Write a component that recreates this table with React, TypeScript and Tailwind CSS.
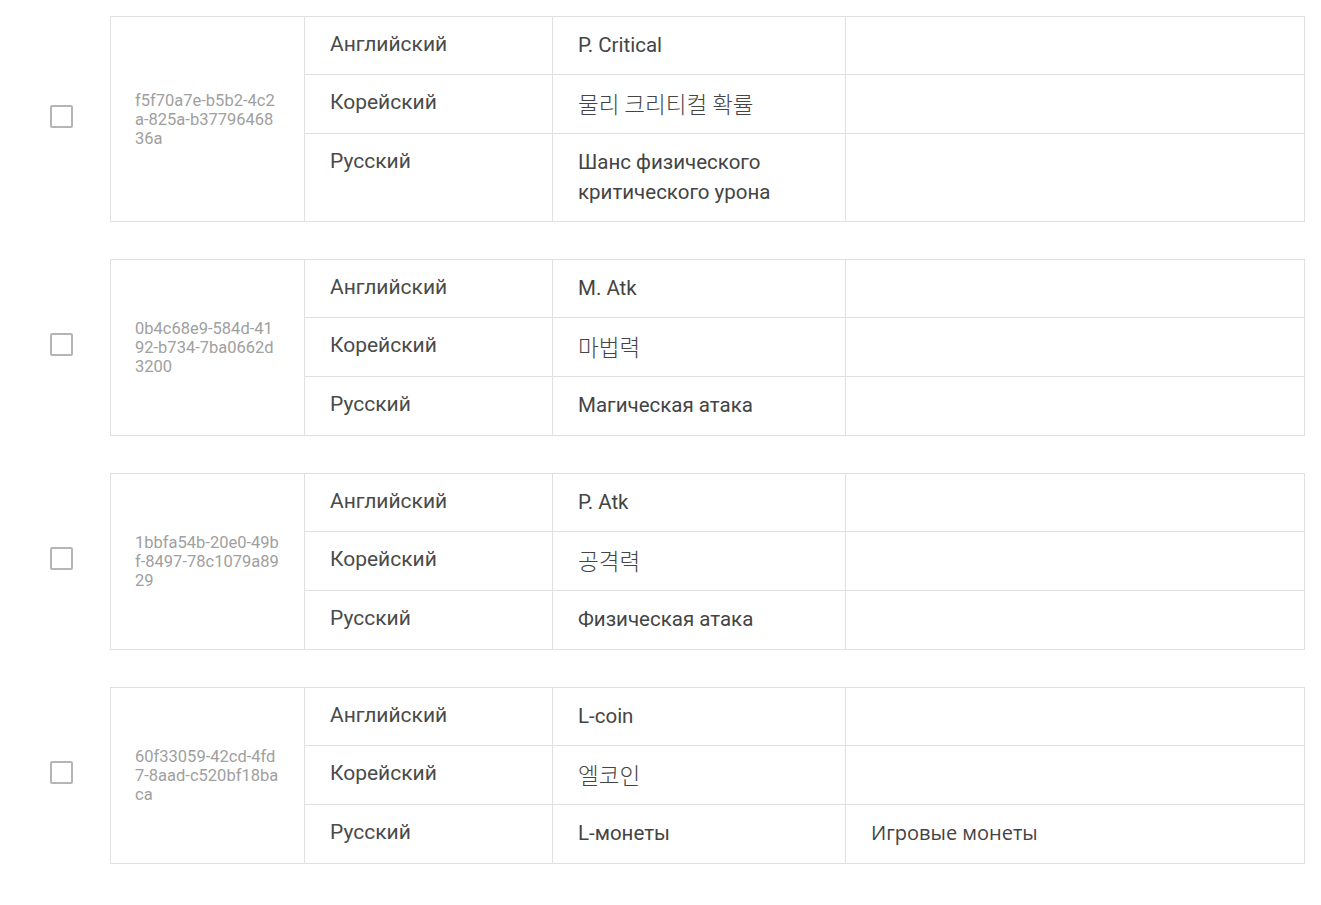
const rows = [
  {
    id: 'f5f70a7e-b5b2-4c2a-825a-b3779646836a',
    en: 'P. Critical',
    ko: '물리 크리티컬 확률',
    ru: 'Шанс физического критического урона',
    note: '',
  },
  { id: '0b4c68e9-584d-4192-b734-7ba0662d3200', en: 'M. Atk', ko: '마법력', ru: 'Магическая атака', note: '' },
  { id: '1bbfa54b-20e0-49bf-8497-78c1079a8929', en: 'P. Atk', ko: '공격력', ru: 'Физическая атака', note: '' },
  { id: '60f33059-42cd-4fd7-8aad-c520bf18baca', en: 'L-coin', ko: '엘코인', ru: 'L-монеты', note: 'Игровые монеты' },
]

function LangRow({
  label,
  value,
  note,
  korean,
  height,
}: {
  label: string
  value: string
  note?: string
  korean?: boolean
  height: string
}) {
  return (
    <div className={`grid grid-cols-[248px_293px_1fr] ${height}`}>
      <div className="border-r border-[#e0e0e0] pl-[25px] pr-4 pt-[13px] leading-[28px] text-[21px] text-[#4a4a4a]">
        {label}
      </div>
      <div className="border-r border-[#e0e0e0] pl-[25px] pr-4 pt-[13px] pb-[14px] leading-[30px] text-[20.5px] text-[#444]">
        {korean ? (
          <span className="text-[22.5px] font-light" style={{ fontFamily: '"Noto Sans CJK KR", sans-serif' }}>
            {value}
          </span>
        ) : (
          <span className="block max-w-[215px]">{value}</span>
        )}
      </div>
      <div
        className="pl-[25px] pr-4 pt-[13px] leading-[30px] text-[20px] text-[#444]"
        style={{ fontFamily: '"Open Sans", sans-serif' }}
      >
        {note}
      </div>
    </div>
  )
}

export default function App() {
  return (
    <div
      className="min-h-[905px] bg-white pt-[16px] pl-[50px] pr-[16px]"
      style={{ fontFamily: 'Roboto, "Noto Sans CJK KR", sans-serif' }}
    >
      <div className="flex flex-col gap-[37px]">
        {rows.map(r => (
          <div key={r.id} className="flex items-center gap-[37px]">
            <div className="w-[23px] h-[23px] shrink-0 border-2 border-[#b5b5b5] rounded-[2px] mb-[6px]" />
            <div className="flex flex-1 border border-[#e0e0e0]">
              <div className="w-[194px] shrink-0 border-r border-[#e0e0e0] flex items-center pl-[24px] pr-[24px]">
                <p className="text-[16.5px] leading-[19px] text-[#a0a0a0] break-all">{r.id}</p>
              </div>
              <div className="flex-1">
                <div className="border-b border-[#e0e0e0]">
                  <LangRow label="Английский" value={r.en} height="h-[57px]" />
                </div>
                <div className="border-b border-[#e0e0e0]">
                  <LangRow label="Корейский" value={r.ko} korean height="h-[58px]" />
                </div>
                <LangRow label="Русский" value={r.ru} note={r.note} height="min-h-[58px]" />
              </div>
            </div>
          </div>
        ))}
      </div>
    </div>
  )
}
